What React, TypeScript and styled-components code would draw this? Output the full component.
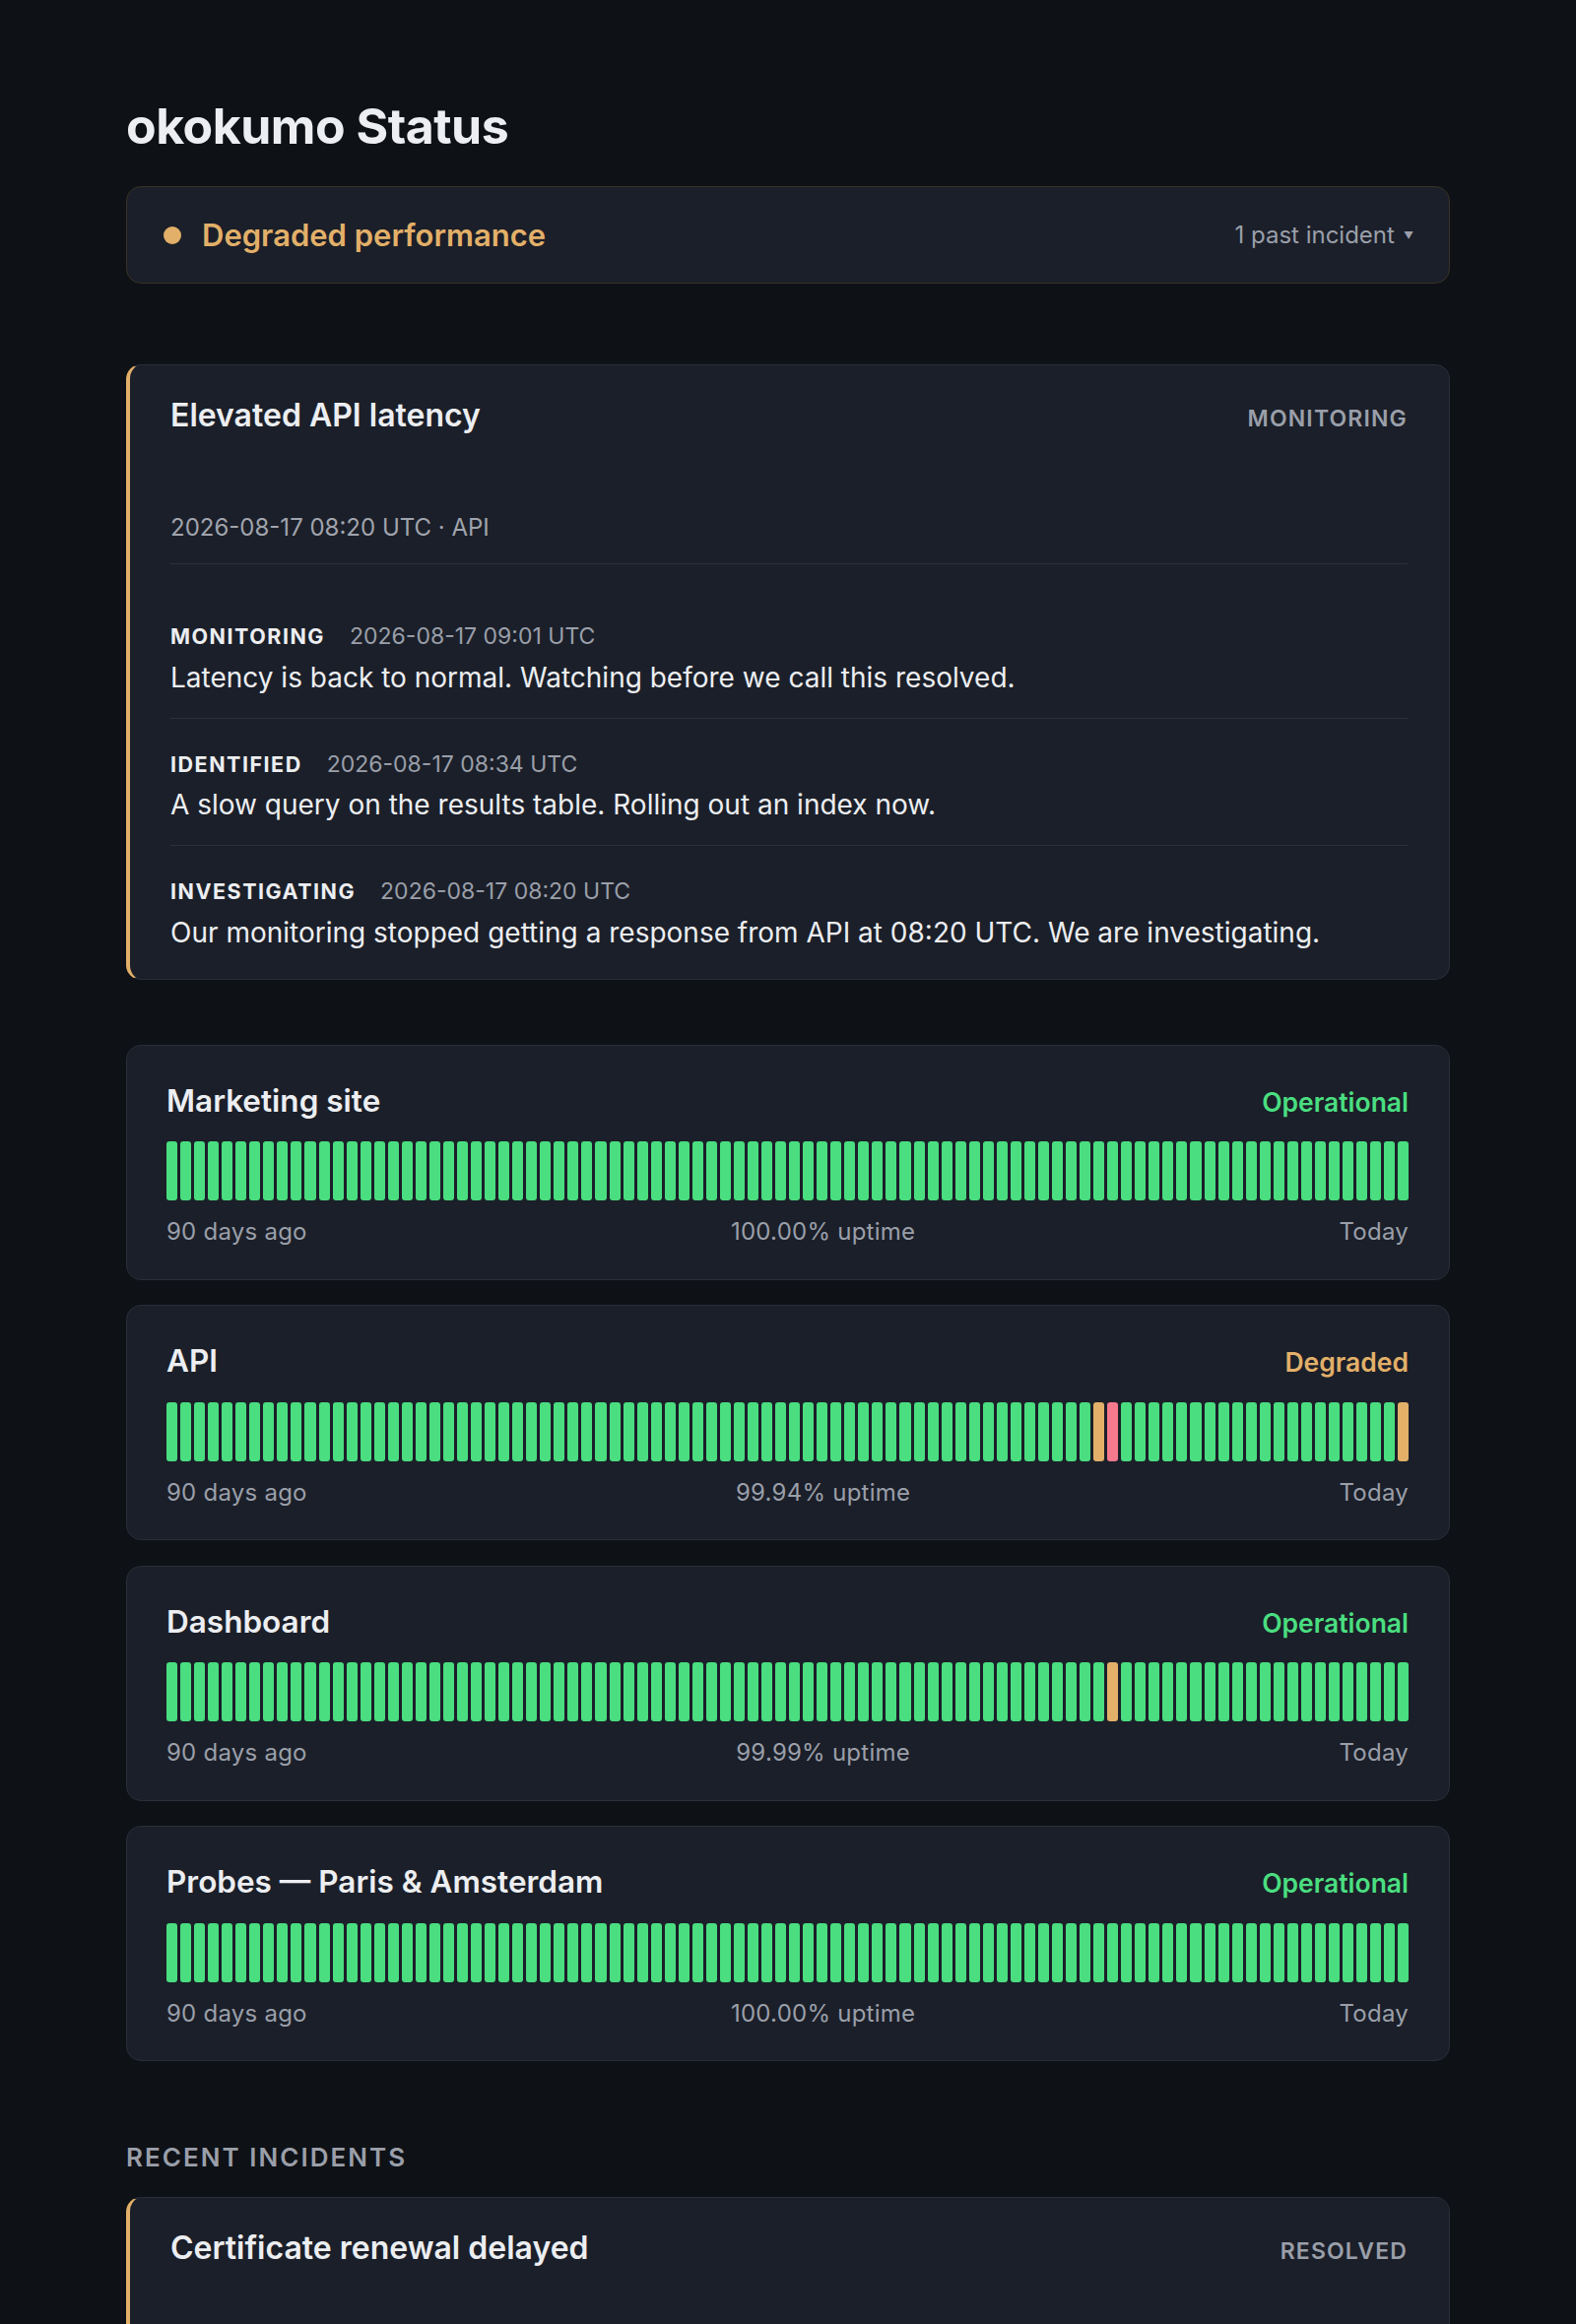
import styled, { createGlobalStyle } from "styled-components";

type DayState = "ok" | "degraded" | "down";

const palette = {
  ok: "#4ade80",
  degraded: "#e2b069",
  down: "#f7798d",
};

const GlobalStyle = createGlobalStyle`
  * { box-sizing: border-box; }
  body {
    margin: 0;
    background: #0e1116;
    color: #eceef2;
    font-family: Inter, "Noto Sans", "Liberation Sans", sans-serif;
  }
`;

const components = [
  { name: "Marketing site", status: "Operational", uptime: "100.00%", marks: {} as Record<number, DayState> },
  { name: "API", status: "Degraded", uptime: "99.94%", marks: { 67: "degraded", 68: "down", 89: "degraded" } as Record<number, DayState> },
  { name: "Dashboard", status: "Operational", uptime: "99.99%", marks: { 68: "degraded" } as Record<number, DayState> },
  { name: "Probes — Paris & Amsterdam", status: "Operational", uptime: "100.00%", marks: {} as Record<number, DayState> },
];

const activeUpdates = [
  { label: "Monitoring", at: "2026-08-17 09:01 UTC", text: "Latency is back to normal. Watching before we call this resolved." },
  { label: "Identified", at: "2026-08-17 08:34 UTC", text: "A slow query on the results table. Rolling out an index now." },
  { label: "Investigating", at: "2026-08-17 08:20 UTC", text: "Our monitoring stopped getting a response from API at 08:20 UTC. We are investigating." },
];

const pastUpdates = [
  { label: "Resolved", at: "2026-07-02 11:40 UTC", text: "The new certificate is live on all edges." },
  { label: "Identified", at: "2026-07-02 10:15 UTC", text: "Renewal job stalled on a DNS challenge. Retrying manually." },
];

function Incident(props: {
  title: string;
  state: string;
  meta: string;
  updates: { label: string; at: string; text: string }[];
}) {
  return (
    <IncidentCard>
      <IncidentHead>
        <IncidentTitle>{props.title}</IncidentTitle>
        <IncidentState>{props.state}</IncidentState>
      </IncidentHead>
      <Meta>{props.meta}</Meta>
      <Updates>
        {props.updates.map((u) => (
          <Update key={u.at}>
            <UpdateHead>
              <UpdateLabel>{u.label}</UpdateLabel>
              <UpdateTime>{u.at}</UpdateTime>
            </UpdateHead>
            <UpdateText>{u.text}</UpdateText>
          </Update>
        ))}
      </Updates>
    </IncidentCard>
  );
}

export default function App() {
  return (
    <Page>
      <GlobalStyle />
      <Title>okokumo Status</Title>
      <Banner>
        <BannerState>
          <Dot />
          Degraded performance
        </BannerState>
        <PastToggle>
          1 past incident <Caret>▼</Caret>
        </PastToggle>
      </Banner>

      <ActiveSection>
        <Incident
          title="Elevated API latency"
          state="Monitoring"
          meta="2026-08-17 08:20 UTC · API"
          updates={activeUpdates}
        />
      </ActiveSection>

      <ComponentList>
        {components.map((c) => (
          <ComponentCard key={c.name}>
            <ComponentHead>
              <ComponentName>{c.name}</ComponentName>
              <ComponentStatus $degraded={c.status !== "Operational"}>{c.status}</ComponentStatus>
            </ComponentHead>
            <Bars>
              {Array.from({ length: 90 }, (_, i) => (
                <Bar key={i} $state={c.marks[i] ?? "ok"} />
              ))}
            </Bars>
            <BarLegend>
              <span>90 days ago</span>
              <span>{c.uptime} uptime</span>
              <span>Today</span>
            </BarLegend>
          </ComponentCard>
        ))}
      </ComponentList>

      <SectionHeading>Recent incidents</SectionHeading>
      <Incident
        title="Certificate renewal delayed"
        state="Resolved"
        meta="2026-07-02 09:50 UTC · Marketing site"
        updates={pastUpdates}
      />
    </Page>
  );
}

const Page = styled.main`
  max-width: 1344px;
  margin: 0 auto;
  padding: 98px 0 96px;
`;

const Title = styled.h1`
  margin: 0 0 31px;
  font-size: 50px;
  line-height: 60px;
  font-weight: 700;
  letter-spacing: -0.01em;
  color: #eceef1;
`;

const Banner = styled.div`
  display: flex;
  align-items: center;
  justify-content: space-between;
  height: 99px;
  padding: 0 36px 0 37px;
  background: #1b1f29;
  border: 1.5px solid #3a3223;
  border-radius: 15px;
`;

const BannerState = styled.div`
  display: flex;
  align-items: center;
  gap: 21px;
  font-size: 31px;
  font-weight: 600;
  color: #e2b069;
`;

const Dot = styled.span`
  width: 18px;
  height: 18px;
  border-radius: 50%;
  background: #e2b069;
`;

const PastToggle = styled.div`
  font-size: 24px;
  color: #9a9fa9;
  display: flex;
  align-items: center;
  gap: 9px;
`;

const Caret = styled.span`
  font-size: 10px;
`;

const ActiveSection = styled.section`
  margin-top: 82px;
`;

const IncidentCard = styled.article`
  background: #1b1f29;
  border: 1.5px solid #2a2e39;
  border-left: 4.5px solid #e2b069;
  border-radius: 15px;
  padding: 31px 42px 27.5px 41px;
`;

const IncidentHead = styled.div`
  display: flex;
  justify-content: space-between;
  align-items: baseline;
  height: 40px;
`;

const IncidentTitle = styled.h2`
  margin: 0;
  font-size: 32px;
  line-height: 40px;
  font-weight: 600;
  color: #eceef1;
`;

const IncidentState = styled.span`
  font-size: 23px;
  line-height: 36px;
  font-weight: 600;
  letter-spacing: 0.05em;
  text-transform: uppercase;
  color: #9a9fa9;
`;

const Meta = styled.div`
  margin-top: 76px;
  padding-bottom: 18px;
  border-bottom: 1.5px solid #2c303b;
  font-size: 24px;
  line-height: 36px;
  color: #a0a4ad;
`;

const Updates = styled.div`
  padding-top: 27px;
`;

const Update = styled.div`
  padding: 30px 0 21px;
  & + & {
    border-top: 1.5px solid #2c303b;
  }
  &:last-child {
    padding-bottom: 0;
  }
`;

const UpdateHead = styled.div`
  display: flex;
  align-items: baseline;
  gap: 25px;
  height: 32.5px;
`;

const UpdateLabel = styled.span`
  font-size: 21.5px;
  line-height: 32px;
  font-weight: 700;
  letter-spacing: 0.07em;
  text-transform: uppercase;
  color: #eceef1;
`;

const UpdateTime = styled.span`
  font-size: 23px;
  line-height: 32px;
  color: #9a9fa9;
`;

const UpdateText = styled.p`
  margin: 5px 0 0;
  font-size: 28px;
  line-height: 40px;
  color: #eceef1;
`;

const ComponentList = styled.section`
  margin-top: 65.5px;
  display: flex;
  flex-direction: column;
  gap: 25.5px;
`;

const ComponentCard = styled.div`
  background: #1b1f29;
  border: 1.5px solid #2a2e39;
  border-radius: 15px;
  padding: 36px 41px 29.5px 40px;
`;

const ComponentHead = styled.div`
  display: flex;
  justify-content: space-between;
  align-items: baseline;
  height: 40px;
`;

const ComponentName = styled.h3`
  margin: 0;
  font-size: 31.5px;
  line-height: 40px;
  font-weight: 600;
  color: #eceef1;
`;

const ComponentStatus = styled.span<{ $degraded: boolean }>`
  font-size: 26.5px;
  line-height: 36px;
  font-weight: 600;
  color: ${(p) => (p.$degraded ? "#e2b069" : "#4ade80")};
`;

const Bars = styled.div`
  margin-top: 21.5px;
  display: flex;
  gap: 3px;
  height: 60px;
`;

const Bar = styled.span<{ $state: DayState }>`
  flex: 1;
  border-radius: 3px;
  background: ${(p) => palette[p.$state]};
`;

const BarLegend = styled.div`
  margin-top: 14px;
  display: flex;
  justify-content: space-between;
  font-size: 24px;
  line-height: 36px;
  letter-spacing: 0.01em;
  color: #9a9fa9;
`;

const SectionHeading = styled.h2`
  margin: 79.5px 0 22px;
  font-size: 26px;
  line-height: 36px;
  font-weight: 600;
  letter-spacing: 0.078em;
  text-transform: uppercase;
  color: #9a9fa9;
`;
